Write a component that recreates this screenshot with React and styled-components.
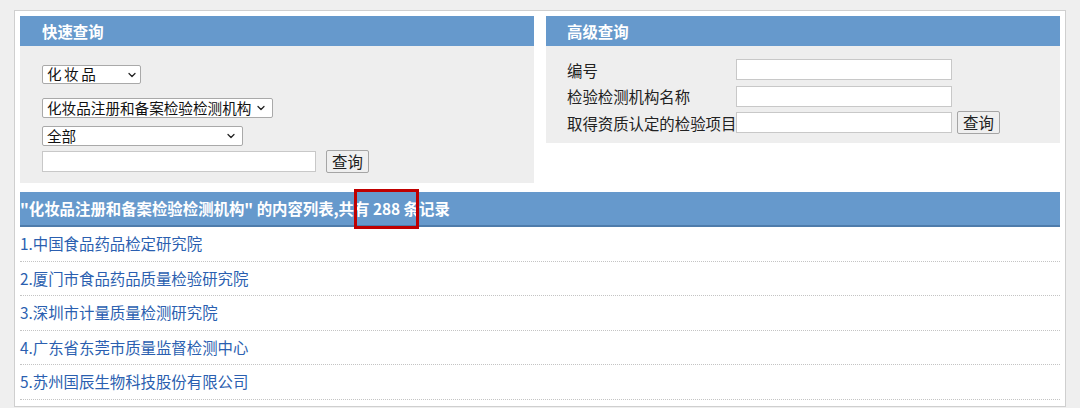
import React from 'react';
import styled, { createGlobalStyle } from 'styled-components';
import { ChevronDown } from 'lucide-react';

const GlobalStyle = createGlobalStyle`
    body {
        margin: 0;
        background: #efefef;
        font-family: "Noto Sans CJK SC", "Noto Sans", sans-serif;
        font-size: 15.4px;
    }
`;

const Page = styled.div`
    padding: 10px 14px 0 14px;
`;

const Frame = styled.div`
    background: #fff;
    border: 1px solid #cfcfcf;
    padding: 5px 5px 6px 5px;
`;

const SearchRow = styled.div`
    display: flex;
    gap: 12px;
    align-items: flex-start;
`;

const Panel = styled.section`
    flex: 1;
    background: #eeeeee;
`;

const PanelTitle = styled.h3`
    margin: 0;
    height: 30px;
    line-height: 30px;
    padding-left: ${p => p.$indent}px;
    background: #6699cc;
    color: #fff;
    font-size: 15.4px;
    font-weight: bold;
`;

const QuickBody = styled.div`
    height: 137px;
    padding: 19px 0 0 22px;
    box-sizing: border-box;
    display: flex;
    flex-direction: column;
    align-items: flex-start;
`;

const SelectBox = styled.div`
    display: flex;
    align-items: center;
    justify-content: space-between;
    box-sizing: border-box;
    width: ${p => p.$w}px;
    height: ${p => p.$h || 20}px;
    margin-top: ${p => p.$mt || 0}px;
    padding: 0 ${p => p.$pr || 5}px 0 4px;
    border: 1px solid #a9a9a9;
    border-radius: 2px;
    background: #fff;
    color: #111;
    font-size: 14.6px;
    white-space: nowrap;
    span {
        line-height: 1;
        letter-spacing: ${p => p.$spread ? '2.5px' : '0'};
    }
    svg {
        flex-shrink: 0;
        margin-left: 4px;
    }
`;

const SearchLine = styled.div`
    display: flex;
    align-items: center;
    gap: 10px;
    margin-top: 4px;
`;

const TextInput = styled.input`
    width: ${p => p.$w}px;
    height: 21px;
    box-sizing: border-box;
    border: 1px solid #c8c8c8;
    background: #fff;
    padding: 0 2px;
`;

const Button = styled.button`
    height: 23px;
    padding: 0 5px;
    font-family: "Noto Sans CJK SC", sans-serif;
    font-size: 15.4px;
    line-height: 19px;
    color: #222;
    background: #efefef;
    border: 1px solid #a5a5a5;
    border-radius: 2px;
`;

const AdvancedBody = styled.div`
    height: 97px;
    padding: 13px 0 0 21px;
    box-sizing: border-box;
    display: grid;
    grid-template-columns: 169px 216px auto;
    grid-auto-rows: 21px;
    row-gap: 5.5px;
    align-items: center;
    justify-content: start;
    color: #222;
    label { white-space: nowrap; }
    button { margin-left: 5px; }
`;

const ListBar = styled.div`
    margin-top: 9px;
    height: 33px;
    line-height: 33px;
    background: #6699cc;
    border-bottom: 2px solid #4e7cab;
    color: #fff;
    font-weight: bold;
    font-size: 15.4px;
    white-space: pre;
`;

const Count = styled.span`
    position: relative;
    &::after {
        content: '';
        position: absolute;
        left: -19px;
        right: -19px;
        top: -8px;
        bottom: -10px;
        border: 3px solid #c00000;
    }
`;

const List = styled.ul`
    list-style: none;
    margin: 0;
    padding: 0;
`;

const Item = styled.li`
    box-sizing: border-box;
    height: 34.5px;
    line-height: 33px;
    border-bottom: 1px dotted #c4c4c4;
    color: #2b5fb0;
    font-size: 15.4px;
`;

const items = [
    '中国食品药品检定研究院',
    '厦门市食品药品质量检验研究院',
    '深圳市计量质量检测研究院',
    '广东省东莞市质量监督检测中心',
    '苏州国辰生物科技股份有限公司',
];

function FakeSelect({ label, ...rest }) {
    return (
        <SelectBox {...rest}>
            <span>{label}</span>
            <ChevronDown size={12} strokeWidth={2.5} color="#222" />
        </SelectBox>
    );
}

export default function App() {
    return (
        <>
            <GlobalStyle />
            <Page>
                <Frame>
                    <SearchRow>
                        <Panel>
                            <PanelTitle $indent={22}>快速查询</PanelTitle>
                            <QuickBody>
                                <FakeSelect label="化妆品" $w={99} $h={19} $pr={2} $spread />
                                <FakeSelect label="化妆品注册和备案检验检测机构" $w={231} $mt={14} />
                                <FakeSelect label="全部" $w={201} $mt={8} />
                                <SearchLine>
                                    <TextInput $w={274} />
                                    <Button>查询</Button>
                                </SearchLine>
                            </QuickBody>
                        </Panel>
                        <Panel>
                            <PanelTitle $indent={21}>高级查询</PanelTitle>
                            <AdvancedBody>
                                <label>编号</label>
                                <TextInput $w={216} />
                                <span />
                                <label>检验检测机构名称</label>
                                <TextInput $w={216} />
                                <span />
                                <label>取得资质认定的检验项目</label>
                                <TextInput $w={216} />
                                <Button>查询</Button>
                            </AdvancedBody>
                        </Panel>
                    </SearchRow>
                    <ListBar>
                        "化妆品注册和备案检验检测机构" 的内容列表,共有 <Count>288</Count> 条记录
                    </ListBar>
                    <List>
                        {items.map((name, i) => (
                            <Item key={name}>{i + 1}.{name}</Item>
                        ))}
                    </List>
                </Frame>
            </Page>
        </>
    );
}
